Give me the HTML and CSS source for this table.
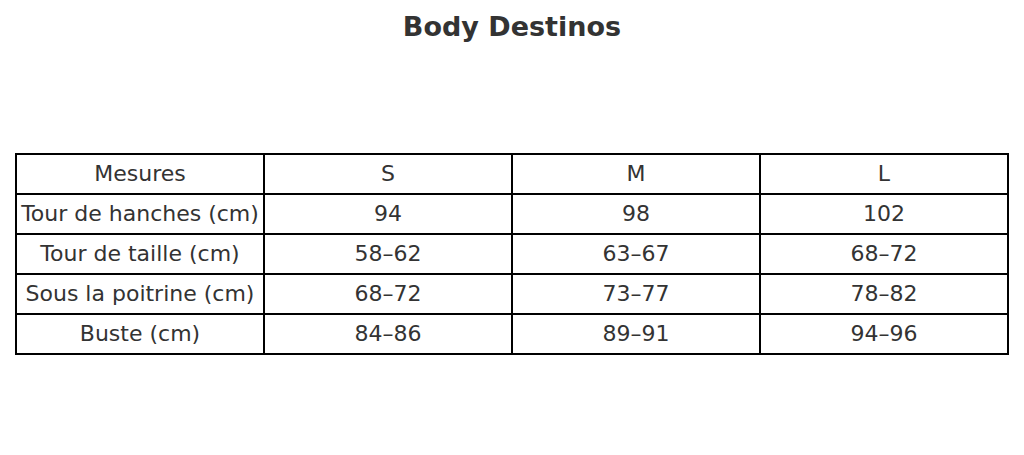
FILE: index.html
```html
<!DOCTYPE html>
<html lang="fr">
<head>
<meta charset="utf-8">
<title>Body Destinos</title>
<link rel="stylesheet" href="styles.css">
</head>
<body>
<div class="page">
  <h1 class="title">Body Destinos</h1>
  <table class="sizes">
    <tr><td>Mesures</td><td>S</td><td>M</td><td>L</td></tr>
    <tr><td>Tour de hanches (cm)</td><td>94</td><td>98</td><td>102</td></tr>
    <tr><td>Tour de taille (cm)</td><td>58–62</td><td>63–67</td><td>68–72</td></tr>
    <tr><td>Sous la poitrine (cm)</td><td>68–72</td><td>73–77</td><td>78–82</td></tr>
    <tr><td>Buste (cm)</td><td>84–86</td><td>89–91</td><td>94–96</td></tr>
  </table>
</div>
</body>
</html>
```
FILE: styles.css
```css
html, body {
  margin: 0;
  padding: 0;
  background: #fff;
}
.page {
  width: 1024px;
  height: 455px;
  font-family: "DejaVu Sans", sans-serif;
  color: #333;
  padding-top: 11px;
  box-sizing: border-box;
}
.title {
  margin: 0;
  text-align: center;
  font-size: 27px;
  font-weight: bold;
  line-height: 32px;
}
.sizes {
  margin: 110px 0 0 15px;
  border-collapse: collapse;
  width: 994px;
  table-layout: fixed;
}
.sizes td {
  border: 2px solid #000;
  height: 38px;
  padding: 0;
  text-align: center;
  font-size: 22px;
  line-height: 22px;
  color: #333;
}
```
